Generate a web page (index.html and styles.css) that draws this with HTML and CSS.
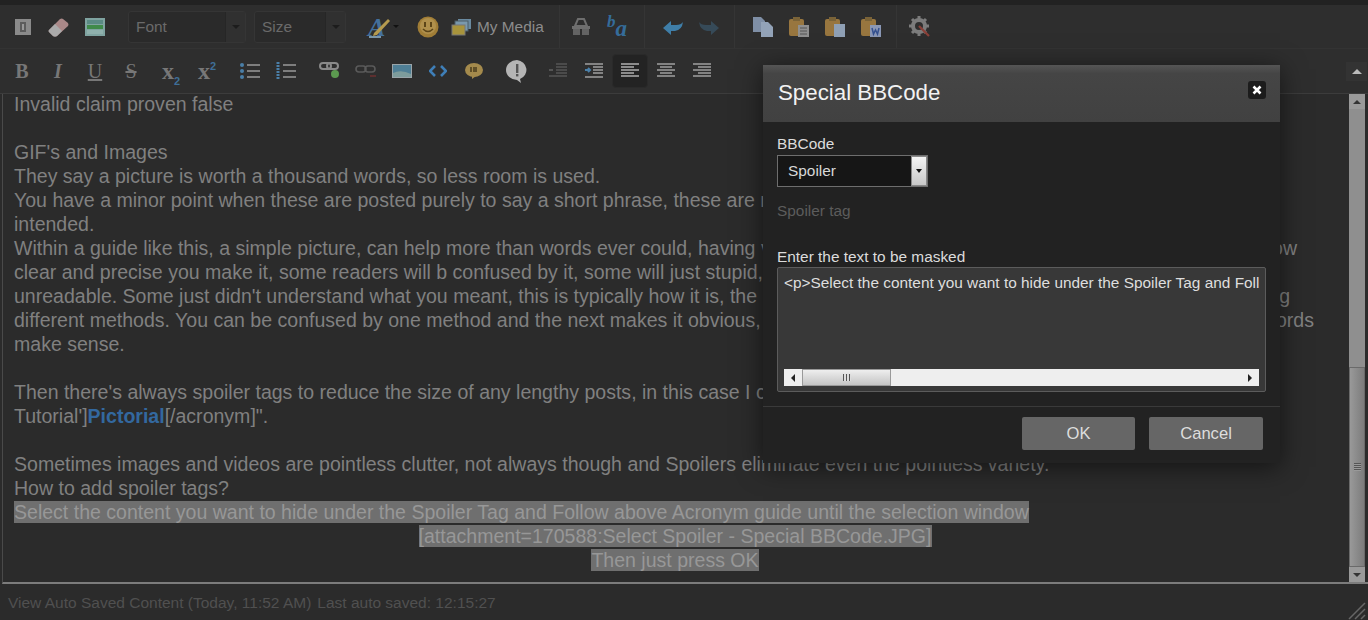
FILE: index.html
```html
<!DOCTYPE html>
<html lang="en">
<head>
    <meta charset="UTF-8">
    <title>Special BBCode</title>
    <link rel="stylesheet" href="styles.css">
</head>
<body>

<div class="editor">
    <div class="toolbar toolbar-top">
        <div class="tool-group group-a">
            <span class="tool"><svg width="20" height="20" viewBox="0 0 20 20"><rect x="2" y="2" width="16" height="16" fill="#8a8a8a"/><rect x="7" y="5" width="6" height="10" fill="#5c5c5c"/><rect x="9" y="7" width="2" height="6" fill="#999"/></svg></span>
            <span class="tool"><svg width="24" height="22" viewBox="0 0 24 22"><path d="M2 14 13 3q2-1 3 0l5 4q1 2 0 3L10 20q-2 1-4 0l-4-4q-1-1 0-2z" fill="#a88"/><path d="M2 14l6-6 7 7-5 5q-2 1-4 0l-4-4q-1-1 0-2z" fill="#aaa"/></svg></span>
            <span class="tool"><svg width="22" height="20" viewBox="0 0 22 20"><rect x="1" y="1" width="20" height="18" fill="#7fa3a0"/><rect x="3" y="3" width="16" height="4" fill="#5a8a84"/><rect x="3" y="8" width="16" height="4" fill="#3f8a4a"/><rect x="3" y="13" width="16" height="4" fill="#8fb0ac"/></svg></span>
        </div>
        <div class="fake-select select-font"><span class="select-label">Font</span><span class="select-arrow"></span></div>
        <div class="fake-select select-size"><span class="select-label">Size</span><span class="select-arrow"></span></div>
        <div class="tool-group group-b">
            <span class="tool tool-pen"><span class="pen-letter">A</span><svg class="pen-stroke" width="24" height="24" viewBox="0 0 24 24"><path d="M6 18 20 4l2 2L9 20l-4 1z" fill="#b49a4e"/><path d="M1 21h12v2H1z" fill="#7a96a8"/></svg><i class="mini-arrow"></i></span>
            <span class="tool tool-smile"><svg width="22" height="22" viewBox="0 0 22 22"><circle cx="11" cy="11" r="10.5" fill="#a07d36"/><circle cx="11" cy="10" r="8" fill="#b0904c"/><rect x="7" y="6" width="2" height="5" fill="#5c4518"/><rect x="13" y="6" width="2" height="5" fill="#5c4518"/><path d="M6 13q5 5 10 0" fill="none" stroke="#5c4518" stroke-width="1.5"/></svg></span>
            <span class="tool-media"><svg width="21" height="18" viewBox="0 0 21 18"><rect x="7" y="1" width="13" height="10" fill="#6a8aa0"/><rect x="4" y="3" width="13" height="10" fill="#7a99ad" stroke="#4c5c66"/><rect x="1" y="7" width="13" height="10" fill="#a8943c" stroke="#777"/></svg><span>My Media</span></span>
        </div>
        <div class="tool-group group-c">
            <span class="tool"><svg width="20" height="18" viewBox="0 0 20 18"><path d="M4 8 7 1h6l3 7z" fill="none" stroke="#6e6e6e" stroke-width="2"/><rect x="1" y="8" width="18" height="3" fill="#6e6e6e"/><rect x="2" y="11" width="7" height="6" fill="#636363"/><rect x="11" y="11" width="7" height="6" fill="#636363"/></svg></span>
            <span class="tool tool-ba"><span class="ba-b">b</span><span class="ba-a">a</span></span>
        </div>
        <div class="tool-group group-d">
            <span class="tool"><svg width="22" height="18" viewBox="0 0 22 18"><path d="M1 10 9 3v4h5q5 0 7-3-1 8-8 9H9v4z" fill="#3f7ea8"/></svg></span>
            <span class="tool"><svg width="22" height="18" viewBox="0 0 22 18"><path d="M21 10 13 3v4H8Q3 7 1 4q1 8 8 9h4v4z" fill="#364a58"/></svg></span>
        </div>
        <div class="tool-group group-e">
            <span class="tool"><svg width="22" height="22" viewBox="0 0 22 22"><path d="M1 1h8l4 4v11H1z" fill="#7f8fa6"/><path d="M9 6h7l5 5v10H9z" fill="#93a3b8"/></svg></span>
            <span class="tool"><svg width="22" height="22" viewBox="0 0 22 22"><rect x="1" y="3" width="15" height="17" rx="2" fill="#98763f"/><rect x="5" y="1" width="7" height="4" fill="#7a6338"/><rect x="10" y="9" width="11" height="12" fill="#8f8f8f"/><path d="M12 12h7M12 15h7M12 18h7" stroke="#555"/></svg></span>
            <span class="tool"><svg width="22" height="22" viewBox="0 0 22 22"><rect x="1" y="3" width="15" height="17" rx="2" fill="#98763f"/><rect x="5" y="1" width="7" height="4" fill="#7a6338"/><rect x="10" y="8" width="11" height="13" fill="#8fa0b5"/></svg></span>
            <span class="tool"><svg width="22" height="22" viewBox="0 0 22 22"><rect x="1" y="3" width="15" height="17" rx="2" fill="#98763f"/><rect x="5" y="1" width="7" height="4" fill="#7a6338"/><rect x="10" y="9" width="11" height="12" fill="#8a97b5"/><path d="M12 12l1.5 6 2-4 2 4 1.5-6" fill="none" stroke="#34508f" stroke-width="1.5"/></svg></span>
        </div>
        <div class="tool-group group-f">
            <span class="tool"><svg width="22" height="22" viewBox="0 0 22 22"><circle cx="10" cy="10" r="6" fill="none" stroke="#7c7c7c" stroke-width="4"/><path d="M10 0v4M10 16v4M0 10h4M16 10h4M3 3l3 3M14 14l3 3M17 3l-3 3M6 14l-3 3" stroke="#7c7c7c" stroke-width="3"/><path d="M10 10l10 10" stroke="#8a4038" stroke-width="2.2"/></svg></span>
        </div>
    </div>

    <div class="toolbar toolbar-bottom">
        <span class="tool glyph"><b class="serif">B</b></span>
        <span class="tool glyph"><b class="serif"><i>I</i></b></span>
        <span class="tool glyph gap-u"><u class="serif">U</u></span>
        <span class="tool glyph"><s class="serif">S</s></span>
        <span class="tool glyph gap-script"><b class="serif script-x">x<sub>2</sub></b></span>
        <span class="tool glyph"><b class="serif script-x">x<sup>2</sup></b></span>
        <span class="tool gap-list"><svg width="22" height="20" viewBox="0 0 22 20"><circle cx="3" cy="4" r="2" fill="#4a7fa8"/><circle cx="3" cy="10" r="2" fill="#4a7fa8"/><circle cx="3" cy="16" r="2" fill="#4a7fa8"/><path d="M8 4h13M8 10h13M8 16h13" stroke="#999" stroke-width="1.6"/></svg></span>
        <span class="tool"><svg width="22" height="20" viewBox="0 0 22 20"><path d="M3 1v18" stroke="#4a7fa8" stroke-width="3" stroke-dasharray="2 1"/><path d="M8 4h13M8 10h13M8 16h13" stroke="#999" stroke-width="1.6"/></svg></span>
        <span class="tool gap-link"><svg width="22" height="22" viewBox="0 0 22 22"><rect x="1" y="3" width="11" height="6" rx="3" fill="none" stroke="#8a8a8a" stroke-width="2"/><rect x="8" y="3" width="11" height="6" rx="3" fill="none" stroke="#8a8a8a" stroke-width="2"/><circle cx="16" cy="14" r="4" fill="#5c9a50"/></svg></span>
        <span class="tool"><svg width="22" height="14" viewBox="0 0 22 14"><rect x="1" y="2" width="10" height="6" rx="3" fill="none" stroke="#5a5a5a" stroke-width="1.6"/><rect x="10" y="2" width="10" height="6" rx="3" fill="none" stroke="#5a5a5a" stroke-width="1.6"/><path d="M15 12h6" stroke="#6a3030" stroke-width="1.6"/></svg></span>
        <span class="tool"><svg width="22" height="16" viewBox="0 0 22 16"><rect x="1" y="1" width="20" height="14" fill="#9aa5aa"/><rect x="2" y="2" width="18" height="12" fill="#4f7f96"/><path d="M2 10q8-4 18 1v3H2z" fill="#7d9c9c"/></svg></span>
        <span class="tool"><svg width="18" height="12" viewBox="0 0 18 12"><path d="M6 1 1 6l5 5M12 1l5 5-5 5" fill="none" stroke="#3f7fb8" stroke-width="2.6"/></svg></span>
        <span class="tool"><svg width="20" height="18" viewBox="0 0 20 18"><ellipse cx="10" cy="8" rx="9" ry="7" fill="#a48a4c"/><path d="M8 13v4l4-3z" fill="#a48a4c"/><path d="M7 5v5M10 5v5M12 5v5" stroke="#4a3c1c" stroke-width="1.5"/></svg></span>
        <span class="tool gap-note"><svg width="24" height="24" viewBox="0 0 24 24"><path d="M12 1a11 10 0 1 0 0 20l4 3-1-4a11 10 0 0 0-3-19z" fill="#b5b5b5"/><rect x="11" y="5" width="2.4" height="9" fill="#555"/><rect x="11" y="15" width="2.4" height="2.4" fill="#555"/></svg></span>
        <span class="tool gap-indent"><svg width="20" height="16" viewBox="0 0 20 16"><path d="M8 1h11M8 4h11M8 7h11M8 10h11M1 13h18" stroke="#555" stroke-width="1.4"/><path d="M1 7h4" stroke="#555" stroke-width="2"/></svg></span>
        <span class="tool"><svg width="20" height="16" viewBox="0 0 20 16"><path d="M1 1h18M9 4h10M9 7h10M9 10h10M1 14h18" stroke="#a0a0a0" stroke-width="1.5"/><path d="M1 7h5M4 5l2 2-2 2" stroke="#4a7fa8" stroke-width="2" fill="none"/></svg></span>
        <span class="tool tool-active"><svg width="20" height="16" viewBox="0 0 20 16"><path d="M1 1h18M1 4h13M1 7h18M1 10h13M1 13h18" stroke="#b0b0b0" stroke-width="1.5"/></svg></span>
        <span class="tool"><svg width="20" height="16" viewBox="0 0 20 16"><path d="M1 1h18M4 4h12M1 7h18M4 10h12M1 13h18" stroke="#a0a0a0" stroke-width="1.5"/></svg></span>
        <span class="tool"><svg width="20" height="16" viewBox="0 0 20 16"><path d="M1 1h18M6 4h13M1 7h18M6 10h13M1 13h18" stroke="#a0a0a0" stroke-width="1.5"/></svg></span>
        <span class="collapse-btn"><i class="collapse-arrow"></i></span>
    </div>

    <div class="content-wrap">
        <div class="content">
            <p>Invalid claim proven false</p>
            <p>&nbsp;</p>
            <p>GIF's and Images</p>
            <p>They say a picture is worth a thousand words, so less room is used.</p>
            <p>You have a minor point when these are posted purely to say a short phrase, these are not</p>
            <p>intended.</p>
            <p class="split split-o"><span>Within a guide like this, a simple picture, can help more than words ever could, having visual</span><span>ow</span></p>
            <p>clear and precise you make it, some readers will b confused by it, some will just stupid, and</p>
            <p class="split split-g"><span>unreadable. Some just didn't understand what you meant, this is typically how it is, the best</span><span>g</span></p>
            <p class="split split-w"><span>different methods. You can be confused by one method and the next makes it obvious, which</span><span>ords</span></p>
            <p>make sense.</p>
            <p>&nbsp;</p>
            <p>Then there's always spoiler tags to reduce the size of any lengthy posts, in this case I chose</p>
            <p>Tutorial']<b class="link">Pictorial</b>[/acronym]".</p>
            <p>&nbsp;</p>
            <p>Sometimes images and videos are pointless clutter, not always though and Spoilers eliminate even the pointless variety.</p>
            <p>How to add spoiler tags?</p>
            <p><span class="selected">Select the content you want to hide under the Spoiler Tag and Follow above Acronym guide until the selection window</span></p>
            <p class="centered"><span class="selected">[attachment=170588:Select Spoiler - Special BBCode.JPG]</span></p>
            <p class="centered"><span class="selected">Then just press OK</span></p>
        </div>
        <div class="scrollbar">
            <span class="scroll-btn"><i class="arrow-up"></i></span>
            <span class="scroll-track"></span>
            <span class="scroll-thumb"><i class="grip"></i></span>
            <span class="scroll-btn"><i class="arrow-down"></i></span>
        </div>
    </div>

    <div class="statusbar">
        <span>View Auto Saved Content (Today, 11:52 AM)</span>
        <span>Last auto saved: 12:15:27</span>
        <svg class="resize-grip" width="20" height="20" viewBox="0 0 20 20"><path d="M19 3 3 19M19 9l-10 10M19 15l-4 4" stroke="#666" stroke-width="1.5"/></svg>
    </div>
</div>

<div class="modal">
    <div class="modal-head">
        <h2>Special BBCode</h2>
        <span class="modal-close"><svg width="10" height="10" viewBox="0 0 10 10"><path d="M1.5 1.5l7 7M8.5 1.5l-7 7" stroke="#fff" stroke-width="2.6"/></svg></span>
    </div>
    <div class="modal-body">
        <label class="field-label">BBCode</label>
        <div class="bb-select">
            <span class="bb-value">Spoiler</span>
            <span class="bb-arrow"><i></i></span>
        </div>
        <div class="hint">Spoiler tag</div>
        <label class="field-label">Enter the text to be masked</label>
        <div class="mask-box">
            <div class="mask-text">&lt;p&gt;Select the content you want to hide under the Spoiler Tag and Foll</div>
            <div class="h-scroll">
                <span class="h-btn"><i class="arrow-left"></i></span>
                <span class="h-thumb"><i class="h-grip"></i></span>
                <span class="h-track"></span>
                <span class="h-btn"><i class="arrow-right"></i></span>
            </div>
        </div>
    </div>
    <div class="modal-foot">
        <button class="btn btn-ok">OK</button>
        <button class="btn btn-cancel">Cancel</button>
    </div>
</div>

</body>
</html>
```

FILE: styles.css
```css
* {
    margin: 0;
    padding: 0;
    box-sizing: border-box;
}

body {
    width: 1368px;
    height: 620px;
    overflow: hidden;
    background: #2b2b2b;
    font-family: "Liberation Sans", Arial, sans-serif;
    color: #808080;
}

.editor {
    display: flex;
    flex-direction: column;
    height: 620px;
    border-top: 5px solid #222;
}

.toolbar {
    display: flex;
    align-items: center;
    background: #2e2e2e;
}

.toolbar-top {
    height: 44px;
    padding-left: 5px;
    border-bottom: 1px solid #333;
}

.toolbar-bottom {
    height: 45px;
    padding-left: 4px;
    border-bottom: 1px solid #3c3c3c;
}

.tool {
    display: flex;
    align-items: center;
    justify-content: center;
    width: 36px;
    height: 34px;
    flex: none;
}

.tool-group {
    display: flex;
    align-items: center;
    height: 100%;
}

.group-a {
    width: 123px;
}

.group-b {
    width: 206px;
    margin-left: 8px;
    padding-left: 8px;
    border-right: 1px solid #353535;
}

.group-c {
    width: 85px;
    padding-left: 3px;
    border-right: 1px solid #353535;
}

.group-d {
    width: 90px;
    padding-left: 10px;
    border-right: 1px solid #353535;
}

.group-e {
    width: 162px;
    padding-left: 10px;
    border-right: 1px solid #353535;
}

.group-f {
    padding-left: 5px;
}

.tool-pen {
    width: 34px;
    position: relative;
}

.pen-letter {
    position: absolute;
    left: 6px;
    top: 3px;
    font-family: "Liberation Serif", serif;
    font-size: 26px;
    font-style: italic;
    font-weight: bold;
    color: #44709c;
}

.pen-stroke {
    position: absolute;
    left: 6px;
    top: 5px;
}

.mini-arrow {
    position: absolute;
    right: -3px;
    top: 15px;
    border: 3px solid transparent;
    border-top: 3px solid #111;
}

.tool-smile {
    margin-left: 14px;
}

.tool-media {
    display: flex;
    align-items: center;
    gap: 5px;
    margin-left: 5px;
    font-size: 15.4px;
    color: #8c8c8c;
}

.tool-ba {
    font-family: "Liberation Serif", serif;
    font-style: italic;
    font-weight: bold;
    color: #356c9a;
}

.ba-b {
    font-size: 17px;
    margin-top: -9px;
}

.ba-a {
    font-size: 23px;
    margin-top: 4px;
}

.fake-select {
    display: flex;
    height: 32px;
    background: #2a2a2a;
    border: 1px solid #353535;
    border-radius: 3px;
    flex: none;
}

.select-font {
    width: 118px;
}

.select-size {
    width: 92px;
    margin-left: 8px;
}

.select-label {
    flex: 1;
    padding-left: 7px;
    line-height: 30px;
    font-size: 15.4px;
    color: #6a6a6a;
}

.select-arrow {
    width: 20px;
    background: #303030;
    border-left: 1px solid #262626;
    position: relative;
}

.select-arrow::after {
    content: "";
    position: absolute;
    left: 6px;
    top: 13px;
    border: 4px solid transparent;
    border-top: 4px solid #1c1c1c;
}

.glyph {
    font-size: 20px;
    color: #777;
}

.serif {
    font-family: "Liberation Serif", serif;
}

.script-x {
    font-size: 24px;
    line-height: 20px;
}

.glyph sub,
.glyph sup {
    font-size: 11px;
    line-height: 0;
    color: #3f6e98;
    font-family: "Liberation Sans", sans-serif;
    font-weight: bold;
}

.gap-u {
    margin-left: 1px;
}

.gap-script {
    margin-left: 4px;
}

.gap-list {
    margin-left: 7px;
}

.gap-link {
    margin-left: 8px;
}

.gap-note {
    margin-left: 7px;
}

.gap-indent {
    margin-left: 5px;
}

.tool-active {
    background: #232323;
    border: 1px solid #2a2a2a;
    border-radius: 4px;
}

.collapse-btn {
    display: flex;
    align-items: center;
    justify-content: center;
    width: 21px;
    height: 19px;
    margin: 0 1px 0 auto;
    background: #333;
}

.collapse-arrow {
    border: 5px solid transparent;
    border-bottom: 5px solid #bbb;
    margin-top: -5px;
}

.content-wrap {
    display: flex;
    flex: 1;
    min-height: 0;
    margin-left: 2px;
    border-left: 1px solid #4a4a4a;
    border-bottom: 2px solid #7c7c7c;
}

.content {
    flex: 1;
    min-width: 0;
    padding: 0 13px 0 11px;
    font-size: 19.55px;
    line-height: 24px;
    color: #808080;
    overflow: hidden;
}

.content p {
    white-space: nowrap;
    height: 24px;
    position: relative;
    top: -2px;
}

.split {
    display: flex;
    justify-content: space-between;
}

.split-o {
    padding-right: 39px;
}

.split-g {
    padding-right: 46px;
}

.split-w {
    padding-right: 22px;
}

.link {
    color: #33689f;
}

.selected {
    background: #6f6f6f;
    color: #979797;
}

.centered {
    text-align: center;
}

.scrollbar {
    display: flex;
    flex-direction: column;
    width: 16px;
    margin-right: 3px;
    background: #8f8f8f;
}

.scroll-btn {
    display: flex;
    align-items: center;
    justify-content: center;
    height: 15px;
    flex: none;
    background: #9a9a9a;
}

.scroll-track {
    flex: 1;
}

.scroll-thumb {
    display: flex;
    align-items: center;
    justify-content: center;
    height: 200px;
    flex: none;
    border: 1px solid #6a6a6a;
    background: linear-gradient(to right, #999, #7c7c7c);
}

.grip {
    width: 7px;
    height: 8px;
    background: repeating-linear-gradient(to bottom, #555 0 1px, #999 1px 2px);
}

.arrow-up,
.arrow-down,
.arrow-left,
.arrow-right {
    display: block;
    width: 0;
    height: 0;
    border: 4px solid transparent;
}

.arrow-up {
    border-bottom-color: #333;
    margin-top: -4px;
}

.arrow-down {
    border-top-color: #333;
    margin-bottom: -4px;
}

.arrow-left {
    border-right-color: #222;
    margin-left: -4px;
}

.arrow-right {
    border-left-color: #222;
    margin-right: -4px;
}

.statusbar {
    position: relative;
    display: flex;
    align-items: center;
    gap: 6px;
    height: 36px;
    padding: 2px 0 0 8px;
    font-size: 15.5px;
    color: #505050;
}

.resize-grip {
    position: absolute;
    right: 2px;
    bottom: 0;
}

.modal {
    position: absolute;
    left: 763px;
    top: 65px;
    width: 517px;
    height: 398px;
    background: #222;
    box-shadow: 0 4px 24px rgba(0, 0, 0, 0.55);
    color: #ddd;
    font-size: 15.4px;
}

.modal-head {
    display: flex;
    align-items: center;
    justify-content: space-between;
    height: 57px;
    padding: 0 14px 2px 15px;
    background: linear-gradient(to bottom, #555, #454545 15%, #414141);
}

.modal-head h2 {
    font-size: 22.3px;
    font-weight: normal;
    color: #f2f2f2;
}

.modal-close {
    display: flex;
    align-items: center;
    justify-content: center;
    width: 18px;
    height: 18px;
    margin-top: -5px;
    background: #1c1c1c;
    border-radius: 3px;
}

.modal-body {
    height: 285px;
    padding: 12px 14px 0;
    border-bottom: 1px solid #3a3a3a;
}

.field-label {
    display: block;
    line-height: 20px;
    margin-bottom: 1px;
    color: #dcdcdc;
}

.bb-select {
    display: flex;
    width: 151px;
    height: 32px;
    background: #161616;
    border: 1px solid #6e6e6e;
}

.bb-value {
    flex: 1;
    padding-left: 10px;
    line-height: 29px;
    color: #d8d8d8;
}

.bb-arrow {
    display: flex;
    align-items: center;
    justify-content: center;
    width: 16px;
    background: linear-gradient(to bottom, #f4f4f4, #c8c8c8);
    border: 1px solid #888;
}

.bb-arrow i {
    border: 3px solid transparent;
    border-top: 4px solid #111;
    margin-top: 3px;
}

.hint {
    margin-top: 16px;
    height: 44px;
    line-height: 16px;
    color: #5c5c5c;
}

.mask-box {
    display: flex;
    flex-direction: column;
    justify-content: space-between;
    width: 489px;
    height: 125px;
    margin-top: -1px;
    padding: 0 6px 5px;
    background: #383838;
    border: 1px solid #5c5c5c;
    border-radius: 2px;
}

.mask-text {
    width: 476px;
    overflow: hidden;
    white-space: nowrap;
    line-height: 30px;
    color: #dedede;
}

.h-scroll {
    display: flex;
    align-items: stretch;
    height: 17px;
    background: #eee;
    flex: none;
}

.h-btn {
    display: flex;
    align-items: center;
    justify-content: center;
    width: 18px;
}

.h-track {
    flex: 1;
}

.h-thumb {
    display: flex;
    align-items: center;
    justify-content: center;
    width: 89px;
    background: linear-gradient(to bottom, #eee, #c4c4c4);
    border: 1px solid #999;
}

.h-grip {
    width: 8px;
    height: 7px;
    background: repeating-linear-gradient(to right, #555 0 1px, #ddd 1px 3px);
}

.modal-foot {
    display: flex;
    justify-content: flex-end;
    gap: 14px;
    padding: 10px 17px 0 0;
}

.btn {
    height: 33px;
    padding-top: 1px;
    background: #666;
    border: none;
    border-radius: 2px;
    font-family: inherit;
    font-size: 16.6px;
    color: #ddd;
}

.btn-ok {
    width: 113px;
}

.btn-cancel {
    width: 114px;
}
```
